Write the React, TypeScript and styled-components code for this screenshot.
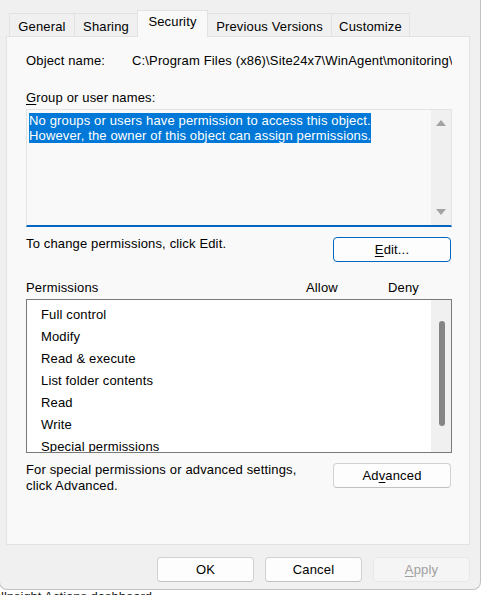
import React from 'react';
import styled, { createGlobalStyle } from 'styled-components';

const GlobalStyle = createGlobalStyle`
  html, body {
    margin: 0;
    padding: 0;
    background: #ffffff;
  }
  body {
    font-family: "Liberation Sans", Arial, sans-serif;
    font-size: 13px;
    color: #000000;
  }
`;

const Window = styled.div`
  width: 480px;
  height: 589px;
  background: #f0f0f0;
  border-right: 1px solid #c2c2c2;
  border-bottom: 1px solid #c2c2c2;
  border-left: 1px solid #c2c2c2;
  border-radius: 0 0 8px 8px;
  margin-left: -1px;
  display: flex;
  flex-direction: column;
  letter-spacing: 0.15px;
`;

const TabStrip = styled.div`
  display: flex;
  align-items: flex-end;
  height: 27px;
  margin-top: 10px;
  padding-left: 9px;
  position: relative;
  z-index: 1;
`;

const Tab = styled.div<{ $w: number; $active?: boolean }>`
  box-sizing: border-box;
  width: ${(p) => p.$w}px;
  height: ${(p) => (p.$active ? 27 : 24)}px;
  margin-right: -1px;
  border: 1px solid #e2e2e2;
  border-bottom: ${(p) => (p.$active ? 'none' : '1px solid #e2e2e2')};
  background: ${(p) => (p.$active ? '#f9f9f9' : '#f0f0f0')};
  display: flex;
  justify-content: center;
  padding-top: ${(p) => (p.$active ? 3 : 5)}px;
  line-height: 15px;
  white-space: nowrap;
  z-index: ${(p) => (p.$active ? 2 : 1)};
`;

const Panel = styled.div`
  box-sizing: border-box;
  margin: -1px 0 0 6px;
  width: 464px;
  height: 509px;
  background: #f9f9f9;
  border: 1px solid #e2e2e2;
  padding: 16px 17px 0 19px;
  display: flex;
  flex-direction: column;
`;

const ObjectRow = styled.div`
  display: flex;
  line-height: 15px;
`;

const ObjectLabel = styled.div`
  width: 106px;
  flex-shrink: 0;
`;

const ObjectValue = styled.div`
  width: 320px;
  overflow: hidden;
  white-space: nowrap;
`;

const Label = styled.div<{ $mt: number }>`
  margin-top: ${(p) => p.$mt}px;
  line-height: 15px;
`;

const Acc = styled.span`
  text-decoration: underline;
  text-underline-offset: 2px;
`;

const GroupBox = styled.div`
  box-sizing: border-box;
  margin-top: 4px;
  height: 118px;
  width: 426px;
  background: #f9f9f9;
  border: 1px solid #e3e3e3;
  border-bottom: 2px solid #0067c0;
  display: flex;
`;

const GroupText = styled.div`
  flex: 1;
  padding: 3px 0 0 2px;
  line-height: 15px;
`;

const Selected = styled.span`
  background: #0078d7;
  color: #ffffff;
  white-space: nowrap;
`;

const ScrollTrack = styled.div`
  width: 20px;
  flex-shrink: 0;
  background: #f0f0f0;
  display: flex;
  flex-direction: column;
  align-items: center;
  justify-content: space-between;
`;

const Arrow = styled.svg`
  display: block;
  margin: 10px 0;
`;

const ActionRow = styled.div<{ $mt: number }>`
  display: flex;
  justify-content: space-between;
  align-items: flex-start;
  width: 425px;
  margin-top: ${(p) => p.$mt}px;
`;

const Hint = styled.div`
  line-height: 16px;
  margin-top: -1px;
`;

const Button = styled.button<{ $w?: number; $primary?: boolean; $disabled?: boolean }>`
  box-sizing: border-box;
  width: ${(p) => p.$w || 118}px;
  height: 25px;
  border-radius: 4px;
  border: 1px solid ${(p) => (p.$primary ? '#0067c0' : p.$disabled ? '#e8e8e8' : '#d1d1d1')};
  border-bottom-color: ${(p) => (p.$primary ? '#0067c0' : p.$disabled ? '#e8e8e8' : '#c2c2c2')};
  background: ${(p) => (p.$disabled ? '#f5f5f5' : '#fdfdfd')};
  color: ${(p) => (p.$disabled ? '#a0a0a0' : '#000000')};
  font-family: "Liberation Sans", Arial, sans-serif;
  font-size: 13px;
  letter-spacing: 0.15px;
  padding: 0;
  line-height: 15px;
  flex-shrink: 0;
`;

const PermHeader = styled.div`
  display: flex;
  margin-top: 18px;
  line-height: 15px;
`;

const PermTitle = styled.div`
  width: 280px;
`;

const PermCol = styled.div<{ $w: number }>`
  width: ${(p) => p.$w}px;
`;

const PermBox = styled.div`
  box-sizing: border-box;
  margin-top: 4px;
  width: 426px;
  height: 154px;
  background: #ffffff;
  border: 1px solid #7a7a7a;
  display: flex;
  overflow: hidden;
`;

const PermList = styled.div`
  flex: 1;
  padding: 4px 0 0 14px;
  overflow: hidden;
`;

const PermItem = styled.div`
  height: 22px;
  line-height: 22px;
  white-space: nowrap;
`;

const Thumb = styled.div`
  width: 6px;
  height: 105px;
  margin-top: 21px;
  margin-left: 1px;
  border-radius: 3px;
  background: #858585;
`;

const ThumbTrack = styled.div`
  width: 20px;
  flex-shrink: 0;
  background: #f0f0f0;
  display: flex;
  justify-content: center;
`;

const Footer = styled.div`
  display: flex;
  justify-content: flex-end;
  gap: 11px;
  padding: 12px 10px 0 0;
`;

const BehindStrip = styled.div`
  height: 5px;
  overflow: hidden;
  padding-left: 1px;
`;

const BehindText = styled.div`
  font-size: 13px;
  line-height: 15px;
  margin-top: -1px;
  color: #1a1a1a;
  white-space: nowrap;
`;

const tabs = [
  { label: 'General', w: 66 },
  { label: 'Sharing', w: 64 },
  { label: 'Security', w: 71, active: true },
  { label: 'Previous Versions', w: 125 },
  { label: 'Customize', w: 79 },
];

const permissions = [
  'Full control',
  'Modify',
  'Read & execute',
  'List folder contents',
  'Read',
  'Write',
  'Special permissions',
];

const App: React.FC = () => {
  return (
    <>
      <GlobalStyle />
      <Window>
        <TabStrip>
          {tabs.map((t) => (
            <Tab key={t.label} $w={t.w} $active={t.active}>
              {t.label}
            </Tab>
          ))}
        </TabStrip>
        <Panel>
          <ObjectRow>
            <ObjectLabel>Object name:</ObjectLabel>
            <ObjectValue>C:\Program Files (x86)\Site24x7\WinAgent\monitoring\bin</ObjectValue>
          </ObjectRow>
          <Label $mt={22}>
            <Acc>G</Acc>roup or user names:
          </Label>
          <GroupBox>
            <GroupText>
              <Selected>No groups or users have permission to access this object.</Selected>
              <br />
              <Selected>However, the owner of this object can assign permissions.</Selected>
            </GroupText>
            <ScrollTrack>
              <Arrow width="10" height="6" viewBox="0 0 10 6">
                <path d="M0 6 L5 0 L10 6 Z" fill="#a3a3a3" />
              </Arrow>
              <Arrow width="10" height="6" viewBox="0 0 10 6">
                <path d="M0 0 L10 0 L5 6 Z" fill="#a3a3a3" />
              </Arrow>
            </ScrollTrack>
          </GroupBox>
          <ActionRow $mt={10}>
            <Hint>To change permissions, click Edit.</Hint>
            <Button $primary>
              <Acc>E</Acc>dit...
            </Button>
          </ActionRow>
          <PermHeader>
            <PermTitle>Permissions</PermTitle>
            <PermCol $w={82}>Allow</PermCol>
            <PermCol $w={50}>Deny</PermCol>
          </PermHeader>
          <PermBox>
            <PermList>
              {permissions.map((p) => (
                <PermItem key={p}>{p}</PermItem>
              ))}
            </PermList>
            <ThumbTrack>
              <Thumb />
            </ThumbTrack>
          </PermBox>
          <ActionRow $mt={10}>
            <Hint>
              For special permissions or advanced settings,
              <br />
              click Advanced.
            </Hint>
            <Button>
              Ad<Acc>v</Acc>anced
            </Button>
          </ActionRow>
        </Panel>
        <Footer>
          <Button $w={97}>OK</Button>
          <Button $w={97}>Cancel</Button>
          <Button $w={97} $disabled>
            <Acc>A</Acc>pply
          </Button>
        </Footer>
      </Window>
      <BehindStrip>
        <BehindText>llnsight Actions dashboard</BehindText>
      </BehindStrip>
    </>
  );
};

export default App;
